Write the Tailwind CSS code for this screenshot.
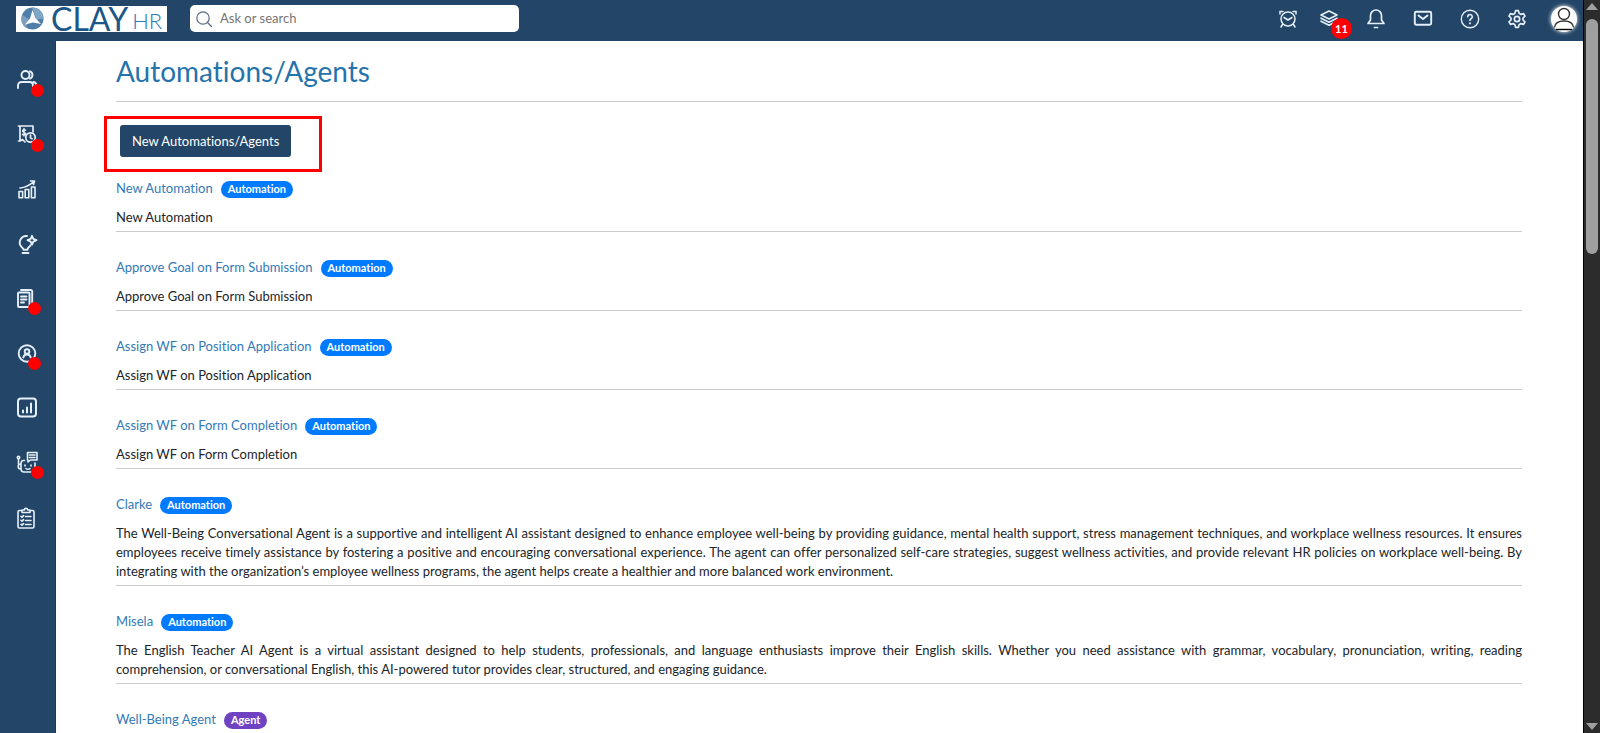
<!DOCTYPE html>
<html lang="en">
<head>
    <meta charset="UTF-8">
    <meta name="viewport" content="width=device-width, initial-scale=1.0">
    <script src="https://cdn.jsdelivr.net/npm/@tailwindcss/browser@4"></script>
    <title>Automations/Agents</title>
</head>
<body class="h-screen flex overflow-hidden bg-white font-['Lato',sans-serif] text-[13px] leading-[19px] text-[#212529] [font-variant-ligatures:none]">
    <div class="flex-1 min-w-0 flex flex-col">
        <header class="h-[41px] shrink-0 flex items-center bg-[#234567] pl-4 pr-1 pb-1 text-[#e6f0fa]">
            <a href="#" aria-label="Clay HR" class="w-[151px] h-[26px] shrink-0 bg-white flex items-center pl-[5px]">
                <svg class="size-[23px] shrink-0" viewBox="0 0 23 23">
                    <circle cx="11.500" cy="11.500" r="11" fill="#4f7fa9"/>
                    <path d="M11 .5a11 11 0 0 1 11.500 11l-7 1z" fill="#7fa6c6"/>
                    <path d="M1 8a11 11 0 0 0 4 13l3-9z" fill="#7d9fbd"/>
                    <path d="M11.500 3l3 8 5.500 6-8-1.500L4 17.500l5-6z" fill="#fff"/>
                </svg>
                <span class="ml-[7px] text-[32px] leading-[26px] font-normal text-[#1d5688]">CLAY</span>
                <span class="ml-1 pt-1 text-[22px] leading-[22px] font-light text-[#2a7ab5]">HR</span>
            </a>
            <label class="ml-[23px] w-[329px] h-[27px] flex items-center gap-2 bg-white rounded-[5px] px-[6px]">
                <svg class="size-4 shrink-0" viewBox="0 0 16 16" fill="none" stroke="#5a6b7f" stroke-width="1.200" stroke-linecap="round"><circle cx="7" cy="7" r="6.200"/><path d="M11.500 11.500l4 4"/></svg>
                <input type="text" aria-label="Search" placeholder="Ask or search" class="w-full text-[13px] leading-[19px] text-gray-700 placeholder:text-[#757575] outline-none">
            </label>
            <nav class="ml-auto flex items-center gap-[27px]">
                <button aria-label="Clock"><svg class="size-5" viewBox="0 0 20 20" fill="none" stroke="currentColor" stroke-width="1.500" stroke-linecap="round"><circle cx="10" cy="10" r="7"/><path d="M6 8.500l4 2.500 4-2.500M2 5V2.500h3M15 2.500h3V5M4.500 15.500L3 18M15.500 15.500L17 18"/></svg></button>
                <button aria-label="Tasks" class="relative -ml-[6px]"><svg class="size-5" viewBox="0 0 20 20" fill="none" stroke="currentColor" stroke-width="1.600" stroke-linejoin="round" stroke-linecap="round"><path d="M10 2l8 4-8 4-8-4zM2 9.200l8 4 8-4M2 12.200l8 4 8-4"/></svg>
                    <span class="absolute left-3 top-[9px] size-[21px] rounded-full bg-[#f00] text-white text-[11px] leading-[21px] font-bold text-center">11</span>
                </button>
                <button aria-label="Notifications"><svg class="size-5" viewBox="0 0 20 20" fill="none" stroke="currentColor" stroke-width="1.700" stroke-linejoin="round" stroke-linecap="round"><path d="M10 1a5.500 5.500 0 0 0-5.500 5.500V11L2 14.500h16l-2.500-3.500V6.500A5.500 5.500 0 0 0 10 1zM8.500 18.500h3"/></svg></button>
                <button aria-label="Mail"><svg class="size-5" viewBox="0 0 20 20" fill="none" stroke="currentColor" stroke-width="1.900" stroke-linejoin="round" stroke-linecap="round"><rect x="1.800" y="2.800" width="16.400" height="13" rx="1.500"/><path d="M5.500 6.500l4.500 3.500 4.500-3.500"/></svg></button>
                <button aria-label="Help"><svg class="size-5" viewBox="0 0 20 20" fill="none" stroke="currentColor" stroke-width="1.400" stroke-linecap="round"><circle cx="10" cy="10" r="8.700"/><path d="M7.700 7.700a2.300 2.300 0 1 1 3.400 2.100c-.8.400-1.100.9-1.100 1.700" stroke-width="1.600"/><path d="M10 14.300v.1" stroke-width="1.900"/></svg></button>
                <button aria-label="Settings"><svg class="size-5" viewBox="0 0 24 24" fill="none" stroke="currentColor" stroke-width="2" stroke-linejoin="round"><circle cx="12" cy="12" r="3.200"/><path d="M9.500 5.200L10.300 2h3.400l.8 3.200 2.200 1.300 3.200-1 1.700 3-2.400 2.300v2.400l2.400 2.300-1.700 3-3.200-1-2.200 1.300-.8 3.200h-3.400l-.8-3.200-2.200-1.300-3.200 1-1.700-3 2.400-2.300v-2.400L2.400 8.500l1.700-3 3.200 1z"/></svg></button>
                <button aria-label="Profile" class="-ml-[3px] mr-[2px] size-[26px] rounded-full bg-white shadow-[0_0_4px_#ffffff]"><svg class="size-[26px]" viewBox="0 0 26 26" fill="none" stroke="#333" stroke-width="1.400"><circle cx="13" cy="8" r="5.500"/><path d="M3.500 21.500c.5-4.500 4.500-6.500 9.500-6.500s9 2 9.500 6.500"/><path d="M5 23.500h16" stroke="#000"/></svg></button>
            </nav>
        </header>
        <div class="flex-1 min-h-0 flex">
            <aside class="w-14 shrink-0 bg-[#234567] border-r border-[#1b3a59] pt-7 pl-4 text-[#e6f0fa]">
                <nav class="flex flex-col gap-[33px]">
                    <a href="#" aria-label="People" class="relative size-[22px]"><svg class="size-[22px]" viewBox="0 0 22 22" fill="none" stroke="currentColor" stroke-width="1.900" stroke-linecap="round"><circle cx="9.500" cy="6" r="4"/><path d="M14 2.300a4 4 0 0 1 0 7.400M2 19v-2.500c0-2 1.500-3.500 3.500-3.500h8c2 0 3.500 1.500 3.500 3.500V19M17.500 13c1.800.4 2.800 1.700 2.800 3.500"/></svg><span class="absolute left-[15px] top-[15px] size-[13px] rounded-full bg-[#f00]"></span></a>
                    <a href="#" aria-label="Payroll" class="relative size-[22px]"><svg class="size-[22px]" viewBox="0 0 22 22" fill="none" stroke="currentColor" stroke-width="1.700" stroke-linecap="round" stroke-linejoin="round"><path d="M17 8V2H2.500M4 2v15l2.500-1.500L9 18M2.500 17H4"/><path d="M9.500 6.200C8.800 5.300 6.500 5.500 6.500 7s3.200 1.100 3.200 2.700-2.600 1.700-3.300.6M8 4.500V12" stroke-width="1.400"/><circle cx="14.500" cy="13.500" r="4.700"/><path d="M14.500 11v2.700l1.500 1"/></svg><span class="absolute left-[15px] top-[15px] size-[13px] rounded-full bg-[#f00]"></span></a>
                    <a href="#" aria-label="Performance" class="size-[22px]"><svg class="size-[22px]" viewBox="0 0 22 22" fill="none" stroke="currentColor" stroke-width="1.600" stroke-linejoin="round" stroke-linecap="round"><rect x="3" y="12.500" width="3.600" height="6.300"/><rect x="9.200" y="10.500" width="3.600" height="8.300"/><rect x="15.400" y="8" width="3.600" height="10.800"/><path d="M4 9C9 8.500 14 6 18 2.500M14.500 2L18.500 2 17.500 5.500"/></svg></a>
                    <a href="#" aria-label="Ideas" class="size-[22px]"><svg class="size-[22px]" viewBox="0 0 22 22" fill="none" stroke="currentColor" stroke-width="1.900" stroke-linejoin="round" stroke-linecap="round"><path d="M11 2a6.600 6.600 0 0 0-5 11.500c1 .8 1.500 1.500 1.500 2.300h4c0-1.200.5-1.900 1.500-2.700.6-.5 1-1 1.500-1.800M6.500 19h6"/><path d="M16 1.800l1.300 3 3.200 1.400-3.200 1.400-1.300 3-1.300-3-3.200-1.400 3.200-1.400z"/></svg></a>
                    <a href="#" aria-label="Documents" class="relative size-[22px]"><svg class="size-[22px]" viewBox="0 0 22 22" fill="none" stroke="currentColor" stroke-width="1.900" stroke-linejoin="round" stroke-linecap="round"><rect x="2" y="3.500" width="11.500" height="14.500" rx="1"/><path d="M5 1h9.500c1 0 1.700.7 1.700 1.700V15M5 7.500h5.500M5 10.500h5.500M5 13.500h3"/></svg><span class="absolute left-3 top-[13px] size-[13px] rounded-full bg-[#f00]"></span></a>
                    <a href="#" aria-label="Account" class="relative size-[22px]"><svg class="size-[22px]" viewBox="0 0 22 22" fill="none" stroke="currentColor" stroke-width="1.900" stroke-linecap="round"><circle cx="11" cy="9.500" r="8.300"/><circle cx="11" cy="7.500" r="2.300"/><path d="M7.300 13.500c.3-2 1.700-3 3.700-3s3.400 1 3.700 3"/></svg><span class="absolute left-3 top-[13px] size-[13px] rounded-full bg-[#f00]"></span></a>
                    <a href="#" aria-label="Reports" class="size-[22px]"><svg class="size-[22px] overflow-visible" viewBox="0 0 22 22" fill="none" stroke="currentColor" stroke-width="2" stroke-linecap="round"><rect x="2" y="-.5" width="18" height="18" rx="3"/><path d="M7 13.500v-2M11 13.500v-5M15 13.500V4.500"/></svg></a>
                    <a href="#" aria-label="Assistant" class="relative size-[22px]"><svg class="size-[22px] overflow-visible" viewBox="0 0 22 22" fill="none" stroke="currentColor" stroke-width="1.600" stroke-linecap="round" stroke-linejoin="round"><path d="M11.500-1.500h9.500v7.500h-6.500l-2.500 2v-2h-.5zM13.500 1h5.500M13.500 3.500h5.500M8.500 6.500H7.500c-2 0-2.500 1-2.500 3v5c0 2.300 1 3.500 3 3.500h8c2 0 3-1 3-3V9M9 11v1M15 11v1M10 14.500c1 1 3 1 4 0M4.500 15c-3 0-3-5 0-5M2.500 10V5"/><circle cx="2.500" cy="3.500" r="1.200"/></svg><span class="absolute left-[15px] top-3 size-[13px] rounded-full bg-[#f00]"></span></a>
                    <a href="#" aria-label="Checklist" class="size-[22px]"><svg class="size-[22px] overflow-visible" viewBox="0 0 22 22" fill="none" stroke="currentColor" stroke-width="1.600" stroke-linecap="round" stroke-linejoin="round"><path d="M6 1.500H3.500C2.500 1.500 2 2 2 3v14.500c0 1 .5 1.500 1.500 1.500h13c1 0 1.500-.5 1.500-1.500V3c0-1-.5-1.500-1.500-1.500H14M6 3.500V1h2.300C8.500-1.200 11.500-1.200 11.700 1H14v2.500zM9.500 7.500h5.500M9.500 11.500h5.500M9.500 15.500h5.500M5 7.300l1 1 1.500-1.700M5 11.300l1 1 1.500-1.700M5 15.300l1 1 1.500-1.700"/></svg></a>
                </nav>
            </aside>
            <main class="flex-1 min-w-0 overflow-hidden pl-[60px] pr-[61px]">
                <h1 class="pt-3 pb-3 text-[28px] leading-9 text-[#2473ac] border-b border-[#ccc]">Automations/Agents</h1>
                <div class="-ml-3 mt-[14px] w-[218px] h-14 border-[3px] border-[#f00] pl-[13px] pt-[6px]">
                    <button class="h-8 px-3 rounded-[3px] bg-[#234567] text-white whitespace-nowrap">New Automations/Agents</button>
                </div>
                <ul class="-mt-[19px] text-justify">
                    <li class="pt-[26px] pb-1 border-b border-[#ccc]">
                        <div class="flex items-center gap-2 mb-[10px]"><a href="#" class="text-[#337ab7]">New Automation</a><span class="px-[7px] h-[17px] mt-[2px] rounded-full bg-[#007bff] text-white text-[11px] leading-4 font-bold">Automation</span></div>
                        <p>New Automation</p>
                    </li>
                    <li class="pt-[26px] pb-1 border-b border-[#ccc]">
                        <div class="flex items-center gap-2 mb-[10px]"><a href="#" class="text-[#337ab7]">Approve Goal on Form Submission</a><span class="px-[7px] h-[17px] mt-[2px] rounded-full bg-[#007bff] text-white text-[11px] leading-4 font-bold">Automation</span></div>
                        <p>Approve Goal on Form Submission</p>
                    </li>
                    <li class="pt-[26px] pb-1 border-b border-[#ccc]">
                        <div class="flex items-center gap-2 mb-[10px]"><a href="#" class="text-[#337ab7]">Assign WF on Position Application</a><span class="px-[7px] h-[17px] mt-[2px] rounded-full bg-[#007bff] text-white text-[11px] leading-4 font-bold">Automation</span></div>
                        <p>Assign WF on Position Application</p>
                    </li>
                    <li class="pt-[26px] pb-1 border-b border-[#ccc]">
                        <div class="flex items-center gap-2 mb-[10px]"><a href="#" class="text-[#337ab7]">Assign WF on Form Completion</a><span class="px-[7px] h-[17px] mt-[2px] rounded-full bg-[#007bff] text-white text-[11px] leading-4 font-bold">Automation</span></div>
                        <p>Assign WF on Form Completion</p>
                    </li>
                    <li class="pt-[26px] pb-1 border-b border-[#ccc]">
                        <div class="flex items-center gap-2 mb-[10px]"><a href="#" class="text-[#337ab7]">Clarke</a><span class="px-[7px] h-[17px] mt-[2px] rounded-full bg-[#007bff] text-white text-[11px] leading-4 font-bold">Automation</span></div>
                        <p>The Well-Being Conversational Agent is a supportive and intelligent AI assistant designed to enhance employee well-being by providing guidance, mental health support, stress management techniques, and workplace wellness resources. It ensures employees receive timely assistance by fostering a positive and encouraging conversational experience. The agent can offer personalized self-care strategies, suggest wellness activities, and provide relevant HR policies on workplace well-being. By integrating with the organization’s employee wellness programs, the agent helps create a healthier and more balanced work environment.</p>
                    </li>
                    <li class="pt-[26px] pb-1 border-b border-[#ccc]">
                        <div class="flex items-center gap-2 mb-[10px]"><a href="#" class="text-[#337ab7]">Misela</a><span class="px-[7px] h-[17px] mt-[2px] rounded-full bg-[#007bff] text-white text-[11px] leading-4 font-bold">Automation</span></div>
                        <p>The English Teacher AI Agent is a virtual assistant designed to help students, professionals, and language enthusiasts improve their English skills. Whether you need assistance with grammar, vocabulary, pronunciation, writing, reading comprehension, or conversational English, this AI-powered tutor provides clear, structured, and engaging guidance.</p>
                    </li>
                    <li class="pt-[26px]">
                        <div class="flex items-center gap-2"><a href="#" class="text-[#337ab7]">Well-Being Agent</a><span class="px-[7px] h-[17px] mt-[2px] rounded-full bg-[#6f42c1] text-white text-[11px] leading-4 font-bold">Agent</span></div>
                    </li>
                </ul>
            </main>
        </div>
    </div>
    <!-- scrollbar -->
    <div class="w-[17px] shrink-0 flex flex-col items-center bg-[#2c2c2c] border-l border-black py-[3px]">
        <svg class="w-3 h-[7px]" viewBox="0 0 12 7"><path d="M6 0l6 7H0z" fill="#a0a0a0"/></svg>
        <div class="mt-[9px] w-3 h-[235px] rounded-full bg-[#9f9f9f]"></div>
        <svg class="mt-auto w-3 h-[7px]" viewBox="0 0 12 7"><path d="M0 0h12L6 7z" fill="#a0a0a0"/></svg>
    </div>
</body>
</html>
